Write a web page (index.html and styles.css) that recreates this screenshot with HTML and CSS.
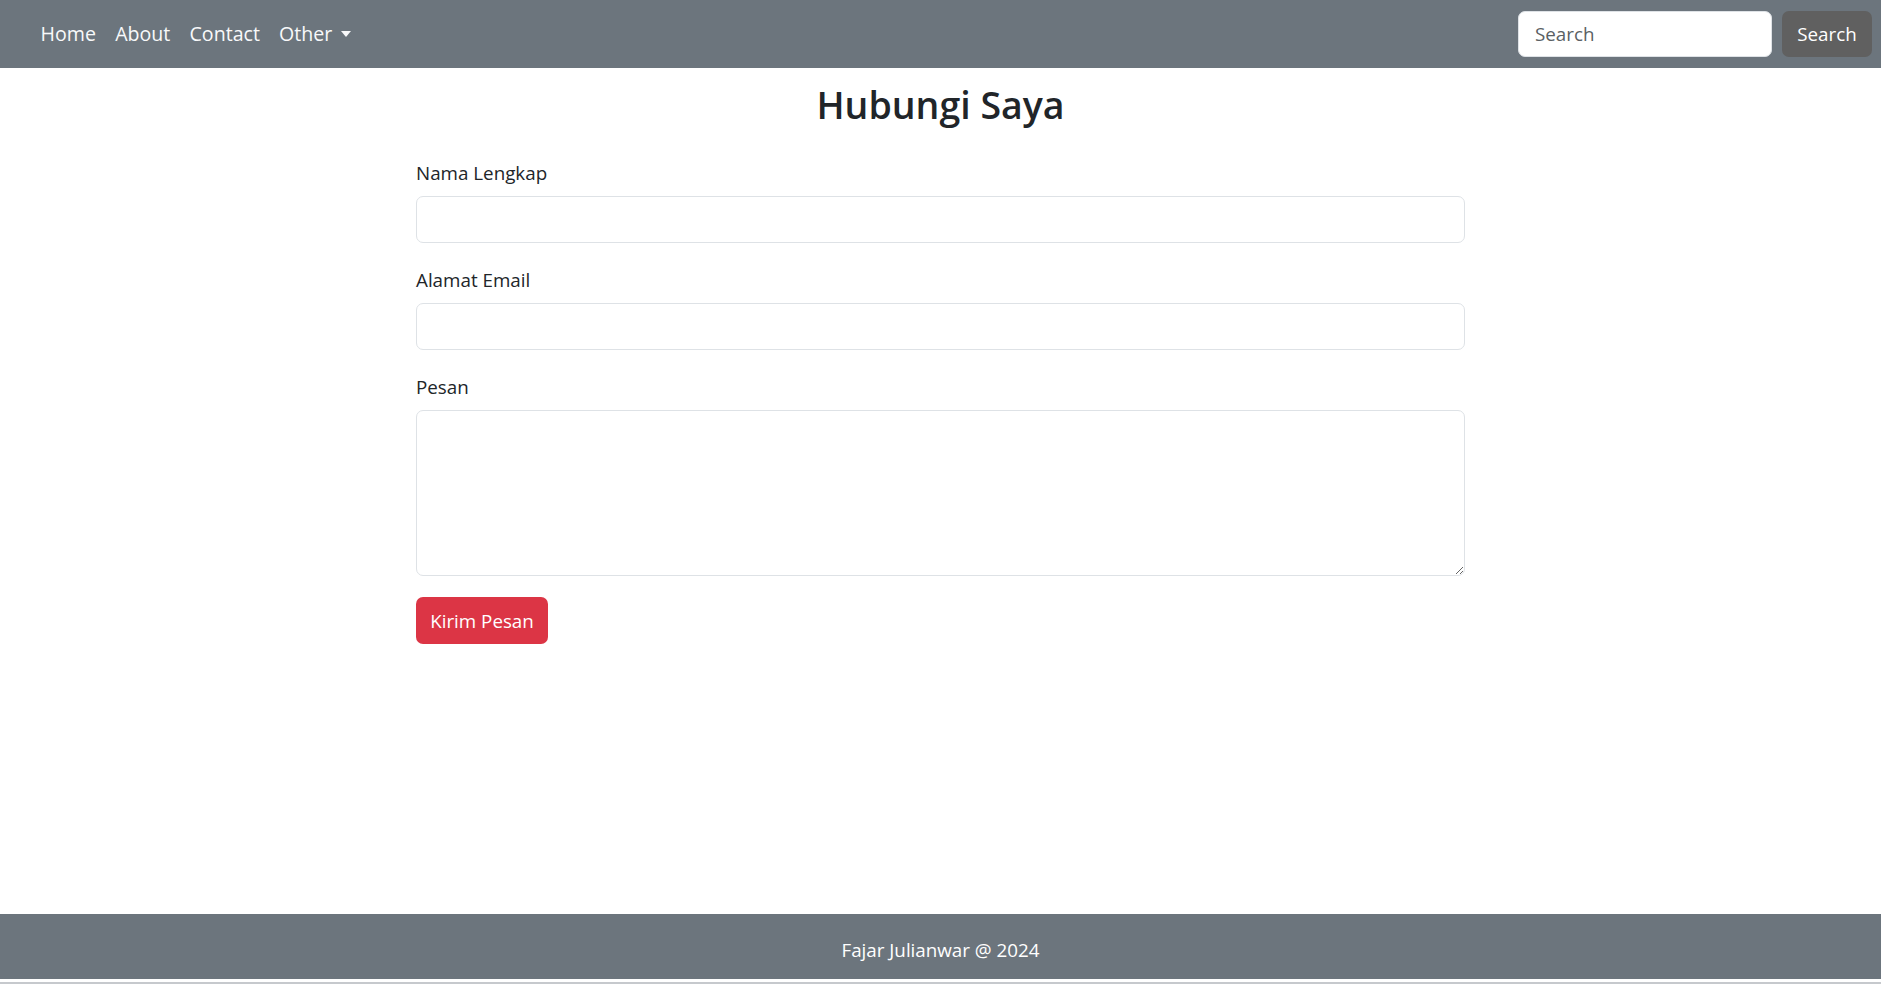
FILE: index.html
```html
<!DOCTYPE html>
<html lang="id">
<head>
<meta charset="utf-8">
<title>Hubungi Saya</title>
<link rel="stylesheet" href="styles.css">
</head>
<body>
<nav class="navbar">
  <ul class="nav-links">
    <li><a class="nav-link" href="#">Home</a></li>
    <li><a class="nav-link" href="#">About</a></li>
    <li><a class="nav-link" href="#">Contact</a></li>
    <li><a class="nav-link dropdown" href="#">Other <span class="caret"></span></a></li>
  </ul>
  <form class="search-form">
    <input class="search-input" type="search" placeholder="Search">
    <button class="search-btn" type="button">Search</button>
  </form>
</nav>
<main class="content">
  <h2 class="title">Hubungi Saya</h2>
  <form class="contact-form">
    <div class="field">
      <label class="label" for="nama">Nama Lengkap</label>
      <input class="control" id="nama" type="text">
    </div>
    <div class="field">
      <label class="label" for="email">Alamat Email</label>
      <input class="control" id="email" type="email">
    </div>
    <div class="field">
      <label class="label" for="pesan">Pesan</label>
      <textarea class="control textarea" id="pesan"></textarea>
    </div>
    <button class="submit-btn" type="button">Kirim Pesan</button>
  </form>
</main>
<footer class="footer">Fajar Julianwar @ 2024</footer>
</body>
</html>
```
FILE: styles.css
```css
* { box-sizing: border-box; }
html, body { margin: 0; height: 100%; }
body {
  font-family: "Open Sans", "Noto Sans", sans-serif;
  font-size: 18.8px;
  color: #212529;
  background: #fff;
  display: flex;
  flex-direction: column;
  min-height: 100vh;
}
.navbar {
  height: 68px;
  flex: none;
  background: #6c757d;
  display: flex;
  align-items: center;
  justify-content: space-between;
  padding: 0 9px 0 31px;
}
.nav-links {
  list-style: none;
  margin: 0;
  padding: 0;
  display: flex;
}
.nav-link {
  display: inline-flex;
  align-items: center;
  padding: 9.6px 9.6px;
  color: #f8f9fa;
  text-decoration: none;
  line-height: 28px;
  font-size: 19.6px;
}
.caret {
  display: inline-block;
  margin-left: 9px;
  width: 0;
  height: 0;
  border-top: 6px solid #f8f9fa;
  border-left: 5.5px solid transparent;
  border-right: 5.5px solid transparent;
}
.search-form {
  display: flex;
  gap: 10px;
  margin: 0;
}
.search-input {
  width: 254px;
  height: 46px;
  border: 1px solid #dee2e6;
  border-radius: 7px;
  padding: 0 16px;
  font: inherit;
  color: #212529;
  background: #fff;
}
.search-input::placeholder { color: #5a5f64; }
.search-btn {
  width: 90px;
  height: 46px;
  border: none;
  border-radius: 7px;
  background: #606060;
  color: #fff;
  font: inherit;
  padding: 0;
}
.content {
  flex: 1;
  width: 1049px;
  margin: 0 auto;
  padding-top: 14px;
}
.title {
  margin: 0 0 31px;
  text-align: center;
  font-size: 37.5px;
  font-weight: 600;
  line-height: 46px;
  color: #212529;
}
.contact-form { margin: 0; }
.field {
  display: flex;
  flex-direction: column;
  margin-bottom: 23px;
}
.label {
  line-height: 29px;
  margin-bottom: 8px;
}
.control {
  width: 100%;
  height: 47px;
  border: 1px solid #dee2e6;
  border-radius: 7px;
  font: inherit;
  padding: 7px 14px;
}
.textarea {
  height: 166px;
  resize: vertical;
}
.field:last-of-type { margin-bottom: 21px; }
.submit-btn {
  width: 132px;
  height: 47px;
  border: none;
  border-radius: 7px;
  background: #dc3545;
  color: #fff;
  font: inherit;
  padding: 0;
}
.footer {
  flex: none;
  height: 70px;
  background: #6c757d;
  color: #fff;
  text-align: center;
  line-height: 65px;
  padding-top: 4px;
  border-bottom: 2px solid #c6c9cd;
  box-shadow: inset 0 -3px 0 #fff;
}
```
